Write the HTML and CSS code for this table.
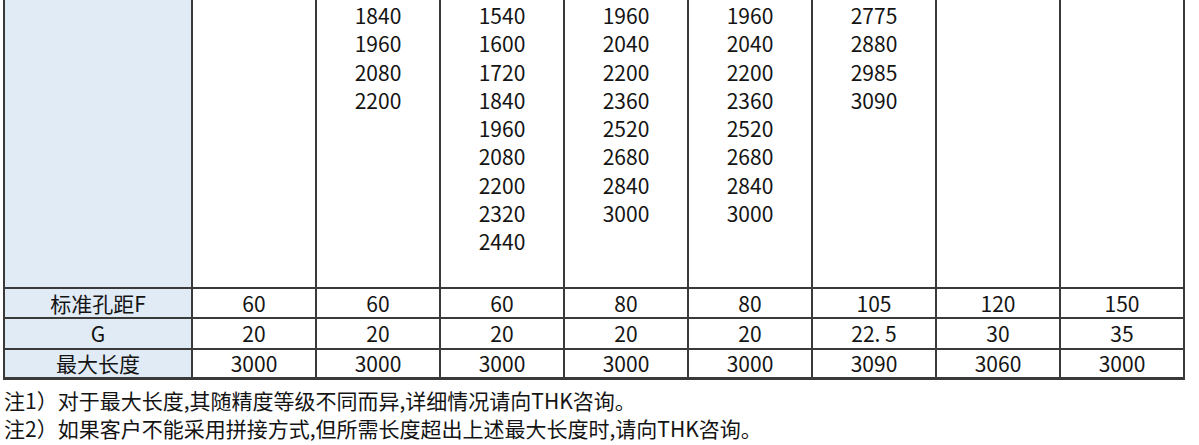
FILE: index.html
```html
<!DOCTYPE html>
<html lang="zh-CN">
<head>
<meta charset="utf-8">
<title>THK</title>
<link rel="stylesheet" href="styles.css">
</head>
<body>
<div class="spec">
  <div class="cell head data"></div>
  <div class="cell data"></div>
  <div class="cell data"><div>1840</div><div>1960</div><div>2080</div><div>2200</div></div>
  <div class="cell data"><div>1540</div><div>1600</div><div>1720</div><div>1840</div><div>1960</div><div>2080</div><div>2200</div><div>2320</div><div>2440</div></div>
  <div class="cell data"><div>1960</div><div>2040</div><div>2200</div><div>2360</div><div>2520</div><div>2680</div><div>2840</div><div>3000</div></div>
  <div class="cell data"><div>1960</div><div>2040</div><div>2200</div><div>2360</div><div>2520</div><div>2680</div><div>2840</div><div>3000</div></div>
  <div class="cell data"><div>2775</div><div>2880</div><div>2985</div><div>3090</div></div>
  <div class="cell data"></div>
  <div class="cell data"></div>

  <div class="cell head row">标准孔距F</div>
  <div class="cell row">60</div>
  <div class="cell row">60</div>
  <div class="cell row">60</div>
  <div class="cell row">80</div>
  <div class="cell row">80</div>
  <div class="cell row">105</div>
  <div class="cell row">120</div>
  <div class="cell row">150</div>

  <div class="cell head row">G</div>
  <div class="cell row">20</div>
  <div class="cell row">20</div>
  <div class="cell row">20</div>
  <div class="cell row">20</div>
  <div class="cell row">20</div>
  <div class="cell row">22. 5</div>
  <div class="cell row">30</div>
  <div class="cell row">35</div>

  <div class="cell head row last">最大长度</div>
  <div class="cell row last">3000</div>
  <div class="cell row last">3000</div>
  <div class="cell row last">3000</div>
  <div class="cell row last">3000</div>
  <div class="cell row last">3000</div>
  <div class="cell row last">3090</div>
  <div class="cell row last">3060</div>
  <div class="cell row last">3000</div>
</div>
<div class="notes">
  <p>注1）对于最大长度,其随精度等级不同而异,详细情况请向THK咨询。</p>
  <p>注2）如果客户不能采用拼接方式,但所需长度超出上述最大长度时,请向THK咨询。</p>
</div>
</body>
</html>
```

FILE: styles.css
```css
* { box-sizing: border-box; }
html, body {
  margin: 0;
  padding: 0;
  background: #ffffff;
}
body {
  font-family: "Noto Sans CJK SC", "Noto Sans", sans-serif;
  font-size: 21px;
  color: #141414;
  overflow: hidden;
}
.spec {
  display: grid;
  grid-template-columns: 190px repeat(8, 124px);
  grid-template-rows: 289px 30px 31px 30px;
  margin-left: 3px;
  width: 1182px;
}
.cell {
  border-right: 2px solid #3a3a3a;
  border-bottom: 2px solid #3a3a3a;
  text-align: center;
}
.head {
  border-left: 2px solid #3a3a3a;
  background: #e1ebf6;
}
.data {
  padding-top: 1px;
  line-height: 28.25px;
}
.row {
  display: flex;
  align-items: center;
  justify-content: center;
  line-height: 1;
}
.last {
  border-bottom-width: 3px;
}
.notes {
  margin: 6px 0 0 4px;
}
.notes p {
  margin: 0;
  line-height: 28px;
  white-space: nowrap;
}
```
